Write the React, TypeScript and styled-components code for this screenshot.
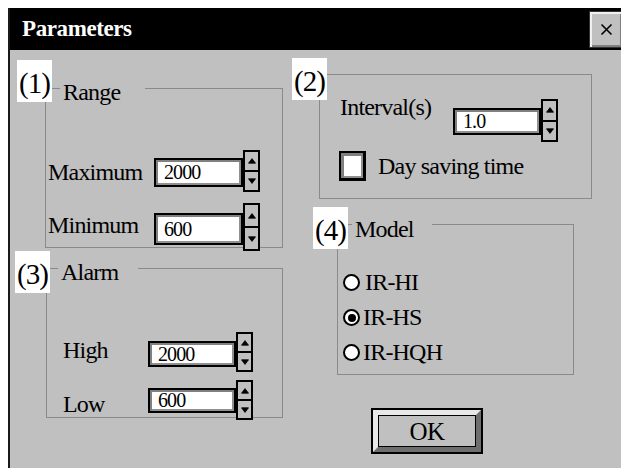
import React from 'react';
import styled, { createGlobalStyle } from 'styled-components';

const GlobalStyle = createGlobalStyle`
  html, body {
    margin: 0;
    padding: 0;
    overflow: hidden;
    background: #fff;
  }
  body {
    font-family: "Liberation Serif", "Times New Roman", serif;
    color: #000;
  }
  * { box-sizing: border-box; }
`;

const Window = styled.div`
  margin: 8px 0 0 8px;
  width: 632px;
  height: 470px;
  display: flex;
  flex-direction: column;
  background: #c0c0c0;
  border-left: 2px solid #1a1a1a;
`;

const TitleBar = styled.div`
  height: 42px;
  flex: none;
  background: #000;
  display: flex;
  align-items: center;
  justify-content: space-between;
  padding-left: 12px;
`;

const Title = styled.span`
  color: #fff;
  font-weight: 700;
  font-size: 23px;
  letter-spacing: -0.4px;
`;

const CloseButton = styled.div`
  width: 34px;
  height: 37px;
  margin-right: 17px;
  background: #c0c0c0;
  border: 1px solid #333;
  box-shadow: inset 2px 2px 0 #f0f0f0, inset -2px -2px 0 #808080;
  display: flex;
  align-items: center;
  justify-content: center;
`;

const Body = styled.div`
  flex: 1;
  display: flex;
  align-items: flex-start;
`;

const LeftCol = styled.div`
  display: flex;
  flex-direction: column;
  padding-left: 35px;
`;

const RightCol = styled.div`
  display: flex;
  flex-direction: column;
  align-items: flex-start;
  margin-left: 36px;
  padding-top: 24px;
`;

const Frame = styled.div<{ $w: number; $h: number; $mt?: number; $ml?: number; $pt: number; $pl: number }>`
  position: relative;
  width: ${(p) => p.$w}px;
  height: ${(p) => p.$h}px;
  margin-top: ${(p) => p.$mt ?? 0}px;
  margin-left: ${(p) => p.$ml ?? 0}px;
  padding: ${(p) => p.$pt}px 0 0 ${(p) => p.$pl}px;
  border: 1px solid #8a8a8a;
  display: flex;
  flex-direction: column;
`;

const Tag = styled.div<{ $x: number; $y: number }>`
  position: absolute;
  left: ${(p) => p.$x}px;
  top: ${(p) => p.$y}px;
  width: 35px;
  height: 42px;
  background: #fff;
  font-size: 29px;
  letter-spacing: -1px;
  line-height: 46px;
  text-align: center;
  overflow: hidden;
`;

const Caption = styled.div<{ $x: number; $y: number; $pr: number }>`
  position: absolute;
  left: ${(p) => p.$x}px;
  top: ${(p) => p.$y}px;
  padding: 0 ${(p) => p.$pr}px 0 3px;
  background: #c0c0c0;
  font-size: 24px;
  letter-spacing: -0.8px;
  line-height: 24px;
`;

const Row = styled.div<{ $mt?: number }>`
  display: flex;
  align-items: flex-start;
  margin-top: ${(p) => p.$mt ?? 0}px;
`;

const Label = styled.div<{ $w: number; $mt: number }>`
  width: ${(p) => p.$w}px;
  margin-top: ${(p) => p.$mt}px;
  font-size: 24px;
  letter-spacing: -0.8px;
  line-height: 24px;
  white-space: nowrap;
`;

const Field = styled.div<{ $w: number; $h: number; $mt: number }>`
  width: ${(p) => p.$w}px;
  height: ${(p) => p.$h}px;
  margin-top: ${(p) => p.$mt}px;
  background: #fff;
  border: 2px solid #000;
  box-shadow: inset 2px 2px 0 #808080, inset -2px -2px 0 #909090;
  display: flex;
  align-items: center;
  padding-left: 8px;
  font-size: 20px;
  letter-spacing: -0.9px;
`;

const Spin = styled.div<{ $h: number }>`
  width: 17px;
  height: ${(p) => p.$h}px;
  border: 2.5px solid #000;
  display: flex;
  flex-direction: column;
`;

const SpinButton = styled.div<{ $down?: boolean }>`
  flex: 1;
  background: #c0c0c0;
  display: flex;
  align-items: center;
  justify-content: center;
  border-top: ${(p) => (p.$down ? '2px solid #000' : 'none')};
`;

const CheckRow = styled.div`
  display: flex;
  align-items: center;
  margin-top: 9px;
  margin-left: -1px;
`;

const CheckBox = styled.div`
  width: 27px;
  height: 30px;
  background: #fff;
  border: 2px solid #000;
  border-right-width: 3px;
  border-bottom-width: 3px;
  box-shadow: inset 3px 3px 0 #808080, inset -2px -2px 0 #909090;
`;

const CheckLabel = styled.span`
  margin-left: 12px;
  font-size: 24px;
  letter-spacing: -0.8px;
  line-height: 24px;
`;

const RadioRow = styled.div`
  display: flex;
  align-items: center;
  height: 35px;
`;

const RadioDot = styled.div<{ $on?: boolean }>`
  width: 17px;
  height: 17px;
  border-radius: 50%;
  border: 2px solid #000;
  background: #fff;
  display: flex;
  align-items: center;
  justify-content: center;
  &::after {
    content: '';
    display: ${(p) => (p.$on ? 'block' : 'none')};
    width: 8px;
    height: 8px;
    border-radius: 50%;
    background: #000;
  }
`;

const RadioLabel = styled.span<{ $gap: number }>`
  margin-left: ${(p) => p.$gap}px;
  font-size: 24px;
  line-height: 35px;
  letter-spacing: -0.8px;
`;

const OkButton = styled.div`
  width: 108px;
  height: 42px;
  margin: 35px 0 0 54px;
  border: 5px solid;
  border-color: #e8e8e8 #6e6e6e #6e6e6e #e8e8e8;
  box-shadow: 0 0 0 2px #000;
  background: #c0c0c0;
`;

const OkFace = styled.div`
  height: 100%;
  border: 1.5px solid #000;
  display: flex;
  align-items: center;
  justify-content: center;
  font-size: 25px;
  letter-spacing: -0.6px;
  line-height: 24px;
  padding-top: 1px;
`;

const Arrow = ({ down }: { down?: boolean }) => (
  <svg width="8" height="6" viewBox="0 0 8 6">
    <polygon
      points={down ? '0.5,0.8 7.5,0.8 4,5.4' : '0.5,5.2 7.5,5.2 4,0.6'}
      fill="#000"
      stroke="#000"
      strokeWidth="0.8"
    />
  </svg>
);

type SpinProps = {
  value: string;
  fw: number;
  fh: number;
  ft: number;
  sh: number;
};

const SpinBox = ({ value, fw, fh, ft, sh }: SpinProps) => (
  <>
    <Field $w={fw} $h={fh} $mt={ft}>
      {value}
    </Field>
    <Spin $h={sh}>
      <SpinButton>
        <Arrow />
      </SpinButton>
      <SpinButton $down>
        <Arrow down />
      </SpinButton>
    </Spin>
  </>
);

export default function App() {
  return (
    <>
      <GlobalStyle />
      <Window>
        <TitleBar>
          <Title>Parameters</Title>
          <CloseButton>
            <svg width="13" height="13" viewBox="0 0 13 13">
              <path d="M1.5 1.5 L11.5 11.5 M11.5 1.5 L1.5 11.5" stroke="#000" strokeWidth="1.6" />
            </svg>
          </CloseButton>
        </TitleBar>
        <Body>
          <LeftCol>
            <Frame $w={238} $h={160} $mt={38} $pt={61} $pl={2}>
              <Tag $x={-29} $y={-29}>(1)</Tag>
              <Caption $x={14} $y={-9} $pr={25}>Range</Caption>
              <Row>
                <Label $w={106} $mt={10}>Maximum</Label>
                <SpinBox value="2000" fw={89} fh={29} ft={8} sh={42} />
              </Row>
              <Row $mt={11}>
                <Label $w={106} $mt={10}>Minimum</Label>
                <SpinBox value="600" fw={89} fh={32} ft={10} sh={48} />
              </Row>
            </Frame>
            <Frame $w={237} $h={150} $mt={20} $ml={1} $pt={63} $pl={16}>
              <Tag $x={-32} $y={-18}>(3)</Tag>
              <Caption $x={11} $y={-9} $pr={20}>Alarm</Caption>
              <Row>
                <Label $w={85} $mt={6}>High</Label>
                <SpinBox value="2000" fw={88} fh={26} ft={9} sh={40} />
              </Row>
              <Row $mt={8}>
                <Label $w={85} $mt={12}>Low</Label>
                <SpinBox value="600" fw={88} fh={25} ft={8} sh={40} />
              </Row>
            </Frame>
          </LeftCol>
          <RightCol>
            <Frame $w={273} $h={125} $pt={24} $pl={20}>
              <Tag $x={-28} $y={-17}>(2)</Tag>
              <Row>
                <Label $w={113} $mt={-4}>Interval(s)</Label>
                <SpinBox value="1.0" fw={88} fh={27} ft={9} sh={43} />
              </Row>
              <CheckRow>
                <CheckBox />
                <CheckLabel>Day saving time</CheckLabel>
              </CheckRow>
            </Frame>
            <Frame $w={237} $h={151} $mt={25} $ml={18} $pt={40} $pl={5}>
              <Tag $x={-25} $y={-18}>(4)</Tag>
              <Caption $x={14} $y={-8} $pr={18}>Model</Caption>
              <RadioRow>
                <RadioDot />
                <RadioLabel $gap={5}>IR-HI</RadioLabel>
              </RadioRow>
              <RadioRow>
                <RadioDot $on />
                <RadioLabel $gap={3}>IR-HS</RadioLabel>
              </RadioRow>
              <RadioRow>
                <RadioDot />
                <RadioLabel $gap={3}>IR-HQH</RadioLabel>
              </RadioRow>
            </Frame>
            <OkButton>
              <OkFace>OK</OkFace>
            </OkButton>
          </RightCol>
        </Body>
      </Window>
    </>
  );
}
